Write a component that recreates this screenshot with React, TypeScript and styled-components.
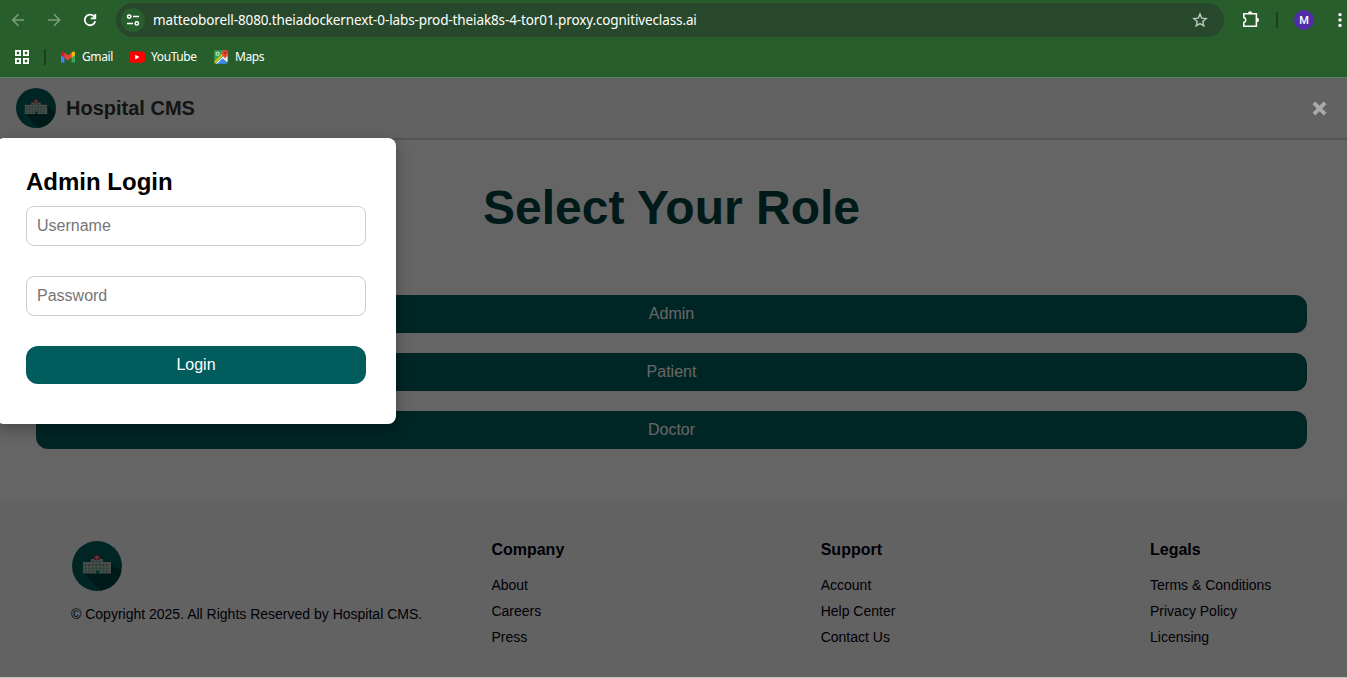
import React from "react";
import styled, { createGlobalStyle } from "styled-components";

const GlobalStyle = createGlobalStyle`
  * { box-sizing: border-box; }
  html, body { margin: 0; padding: 0; overflow: hidden; }
  body { font-family: "Liberation Sans", Arial, sans-serif; }
  h1, h2, h3, p, ul { margin: 0; padding: 0; }
  svg { display: block; flex-shrink: 0; }
`;

const Window = styled.div`
  width: 1347px;
  height: 678px;
  display: flex;
  flex-direction: column;
  overflow: hidden;
`;

const Chrome = styled.div`
  height: 78px;
  flex-shrink: 0;
  background: #285e2b;
  border-bottom: 1px solid #56805a;
  font-family: "Noto Sans", "Open Sans", sans-serif;
  color: #fff;
`;

const Toolbar = styled.div`
  height: 40px;
  display: flex;
  align-items: center;
  padding-left: 10px;
`;

const NavIcons = styled.div`
  display: flex;
  gap: 20px;
  width: 106px;
`;

const AddressBar = styled.div`
  width: 1108px;
  height: 34px;
  border-radius: 17px;
  background: #27482a;
  display: flex;
  align-items: center;
  padding: 0 16px 0 5px;
`;

const SiteBadge = styled.span`
  width: 24px;
  height: 24px;
  border-radius: 50%;
  background: #285e2b;
  display: grid;
  place-items: center;
`;

const Url = styled.span`
  flex: 1;
  margin-left: 8px;
  font-size: 13.5px;
  letter-spacing: -0.115px;
  line-height: 20px;
  white-space: nowrap;
`;

const ToolbarActions = styled.div`
  display: flex;
  align-items: center;
  margin-left: 17px;
`;

const Divider = styled.span<{ $space: string }>`
  width: 2px;
  height: 16px;
  background: #1a401c;
  margin: ${(p) => p.$space};
`;

const Avatar = styled.span`
  width: 20px;
  height: 20px;
  border-radius: 50%;
  background: #512da8;
  font: 500 11px/21px Roboto, sans-serif;
  text-align: center;
  margin-right: 24px;
`;

const Bookmarks = styled.div`
  height: 34px;
  display: flex;
  align-items: center;
  padding-left: 14px;
`;

const Bookmark = styled.span<{ $width: number }>`
  width: ${(p) => p.$width}px;
  display: flex;
  align-items: center;
  gap: 6px;
  font-size: 12px;
  letter-spacing: -0.4px;
  line-height: 16px;
  white-space: nowrap;
`;

const Page = styled.div`
  position: relative;
  flex: 1;
  display: flex;
  flex-direction: column;
  background: #fcfcfc;
  border-bottom: 1px solid #c3c5ad;
`;

const Header = styled.header`
  height: 62px;
  flex-shrink: 0;
  display: flex;
  align-items: center;
  gap: 10px;
  padding: 0 16px;
  background: #f6f6f6;
  border-bottom: 2px solid #cfcfcf;
`;

const Brand = styled.span`
  font-size: 20px;
  font-weight: 700;
  line-height: 24px;
  color: #333;
`;

const Main = styled.main`
  height: 361px;
  flex-shrink: 0;
  padding: 40px 40px 0 36px;
`;

const Title = styled.h1`
  font-size: 48px;
  line-height: 56px;
  text-align: center;
  color: #003f3f;
`;

const Roles = styled.div`
  display: flex;
  flex-direction: column;
  gap: 20px;
  margin-top: 59px;
`;

const Button = styled.button`
  display: block;
  width: 100%;
  height: 38px;
  border: 0;
  border-radius: 12px;
  padding: 0;
  background: #015c5d;
  color: #fff;
  font: 16px/18px "Liberation Sans", Arial, sans-serif;
`;

const Footer = styled.footer`
  flex: 1;
  display: grid;
  grid-template-columns: 420.4px 329.3px 329.3px auto;
  padding: 40px 0 0 71px;
  background: #f5f5f5;
  color: #000010;
`;

const About = styled.div`
  svg { margin-left: 1px; }
`;

const Copyright = styled.p`
  margin-top: 15px;
  font-size: 14px;
  line-height: 16px;
`;

const LinkColumn = styled.div``;

const ColumnTitle = styled.h3`
  font-size: 16px;
  line-height: 18px;
  margin-bottom: 14px;
`;

const Links = styled.ul`
  list-style: none;
  font-size: 14px;
  line-height: 26px;
  margin-top: -1px;
`;

const Overlay = styled.div`
  position: absolute;
  inset: 0;
  background: rgba(0, 0, 0, 0.6);
`;

const Close = styled.span`
  position: absolute;
  top: 23px;
  right: 20.5px;
`;

const Modal = styled.section`
  position: absolute;
  top: 60px;
  left: -4px;
  width: 400px;
  height: 286px;
  padding: 30px;
  border-radius: 8px;
  background: #fff;
  box-shadow: 0 5px 15px rgba(0, 0, 0, 0.3);
`;

const ModalTitle = styled.h2`
  font-size: 24px;
  line-height: 28px;
  margin-bottom: 10px;
`;

const Field = styled.input`
  display: block;
  width: 340px;
  height: 40px;
  margin-bottom: 30px;
  padding: 0 10px;
  border: 1px solid #ccc;
  border-radius: 8px;
  font: 16px "Liberation Sans", Arial, sans-serif;
  &::placeholder { color: #757575; }
`;

const Logo = ({ size }: { size: number }) => (
  <svg width={size} height={size} viewBox="0 0 50 50">
    <clipPath id={`disc${size}`}><circle cx="25" cy="25" r="25" /></clipPath>
    <g clipPath={`url(#disc${size})`}>
      <path fill="#005e5c" d="M0 0h50v50H0z" />
      <path fill="#003f3f" d="M11 32 29 50h21V31L38 21z" />
      <path fill="#b4c0b8" d="M11 21h8v-3h12v3h8v11.5H11z" />
      <path stroke="#5f9c87" strokeWidth="1.8" strokeDasharray="2 1.6" d="M12.5 24h25M12.5 27.3h25M12.5 30.4h25M20.5 20.6h9" />
      <path fill="#007a65" d="M24 29.5h3v3h-3z" />
      <path fill="#c63b50" d="M23.3 14h3.4l1.3 1.3v3l-1 .7h-4l-1-.7v-3z" />
      <path stroke="#eebcc4" strokeWidth="1" d="M23.4 16.6h3.2M25 15v3.2" />
    </g>
  </svg>
);

const Arrow = ({ forward = false }: { forward?: boolean }) => (
  <svg width="16" height="16" viewBox="0 0 16 16" fill="none" stroke="#7d9f7e" strokeWidth="1.6">
    <path d={forward ? "M2 8h11.5M8 2.3 13.7 8 8 13.7" : "M14 8H3M8.5 2.3 2.8 8l5.7 5.7"} />
  </svg>
);

const columns = [
  { title: "Company", links: ["About", "Careers", "Press"] },
  { title: "Support", links: ["Account", "Help Center", "Contact Us"] },
  { title: "Legals", links: ["Terms & Conditions", "Privacy Policy", "Licensing"] },
];

export default function App() {
  return (
    <Window>
      <GlobalStyle />
      <Chrome>
        <Toolbar>
          <NavIcons>
            <Arrow />
            <Arrow forward />
            <svg width="16" height="16" viewBox="0 0 16 16" fill="none" stroke="#fff" strokeWidth="1.8">
              <path d="M13.2 9.2A5.3 5.3 0 1 1 11.8 4.2L13 5.5M13.3 2v4.4H8.8" />
            </svg>
          </NavIcons>
          <AddressBar>
            <SiteBadge>
              <svg width="14" height="14" viewBox="0 0 14 14" fill="none" stroke="#fff" strokeWidth="1.5">
                <circle cx="3.2" cy="3.6" r="1.7" />
                <path d="M7 3.6h6M1 10.4h6" />
                <circle cx="10.8" cy="10.4" r="1.7" />
              </svg>
            </SiteBadge>
            <Url>matteoborell-8080.theiadockernext-0-labs-prod-theiak8s-4-tor01.proxy.cognitiveclass.ai</Url>
            <svg width="16" height="16" viewBox="0 0 16 16" fill="none" stroke="#bfc8bf" strokeWidth="1.4">
              <path d="m8 1.9 1.7 4.2 4.5.4-3.4 3 1 4.4L8 11.6l-3.8 2.3 1-4.4-3.4-3 4.5-.4z" />
            </svg>
          </AddressBar>
          <ToolbarActions>
            <svg width="20" height="20" viewBox="0 0 20 20" fill="none" stroke="#fff" strokeWidth="1.6" strokeLinejoin="round">
              <path d="M2.8 3.8h12.6v12.4H2.8v-3.6c2.6-.6 2.6-4.6 0-5.2z" />
              <path fill="#fff" stroke="none" d="M7 3.4a2.1 2.1 0 0 1 4.2 0zM15.8 7.7a2.1 2.1 0 0 1 0 4.4z" />
            </svg>
            <Divider $space="0 16px 0 15px" />
            <Avatar>M</Avatar>
            <svg width="4" height="16" viewBox="0 0 4 16" fill="#fff">
              <circle cx="2" cy="2.6" r="1.7" /><circle cx="2" cy="8" r="1.7" /><circle cx="2" cy="13.4" r="1.7" />
            </svg>
          </ToolbarActions>
        </Toolbar>
        <Bookmarks>
          <svg width="16" height="16" viewBox="0 0 16 16" fill="none" stroke="#fff" strokeWidth="1.8">
            <path d="M1.9 1.9h4.2v4.2H1.9zM9.9 1.9h4.2v4.2H9.9zM1.9 9.9h4.2v4.2H1.9zM9.9 9.9h4.2v4.2H9.9z" />
          </svg>
          <Divider $space="0 14px" />
          <Bookmark $width={69}>
            <svg width="16" height="16" viewBox="0 0 16 16">
              <path fill="#4285f4" d="M1 5v8.5h3.4V7z" />
              <path fill="#34a853" d="M11.6 7v6.5H15V5z" />
              <path fill="#ea4335" d="M4.2 8.6V3.5L8 6.4l3.8-2.9v5.1L8 11.4z" />
              <path fill="#c5221f" d="M1 4.2C1 2.4 2.8 2 4.4 3.6v5L1 6.2z" />
              <path fill="#fbbc04" d="M15 4.2c0-1.8-1.8-2.2-3.4-.6v5L15 6.2z" />
            </svg>
            Gmail
          </Bookmark>
          <Bookmark $width={84}>
            <svg width="16" height="16" viewBox="0 0 16 16">
              <rect y="2.4" width="16" height="11.4" rx="3" fill="#f00" />
              <path fill="#fff" d="M6.2 5.7v4.8L10.5 8.1z" />
            </svg>
            YouTube
          </Bookmark>
          <Bookmark $width={70}>
            <svg width="16" height="16" viewBox="0 0 16 16">
              <path fill="#34a853" d="M1.4 1.4h12v13H1.4z" />
              <path fill="#f1f3f4" d="M2.5 14.6 12.4 5.2h2.2v8.4l-4.8-4.2-5 5.2z" />
              <path fill="#4285f4" d="M4.4 14.8 9.3 9.4l5.2 5.4z" />
              <path fill="#fbbc04" d="m1.4 12.6 8-8 1.1 1.2-8.8 8.8z" />
              <circle cx="4.6" cy="4.8" r="1.6" stroke="#fff" strokeWidth=".8" fill="none" />
              <path fill="#ea4335" d="M12 10c-.3-2-3-3-3-6a3.1 3.1 0 0 1 6.2 0c0 3-2.8 4-3.2 6z" />
              <circle cx="12.1" cy="3.8" r="1.1" fill="#a52714" />
            </svg>
            Maps
          </Bookmark>
        </Bookmarks>
      </Chrome>
      <Page>
        <Header>
          <Logo size={40} />
          <Brand>Hospital CMS</Brand>
        </Header>
        <Main>
          <Title>Select Your Role</Title>
          <Roles>
            <Button>Admin</Button>
            <Button>Patient</Button>
            <Button>Doctor</Button>
          </Roles>
        </Main>
        <Footer>
          <About>
            <Logo size={50} />
            <Copyright>© Copyright 2025. All Rights Reserved by Hospital CMS.</Copyright>
          </About>
          {columns.map((c) => (
            <LinkColumn key={c.title}>
              <ColumnTitle>{c.title}</ColumnTitle>
              <Links>{c.links.map((l) => <li key={l}>{l}</li>)}</Links>
            </LinkColumn>
          ))}
        </Footer>
        <Overlay />
        <Close>
          <svg width="15" height="15" viewBox="0 0 15 15" stroke="#aaa" strokeWidth="3.9">
            <path d="m1.9 1.9 11.2 11.2M13.1 1.9 1.9 13.1" />
          </svg>
        </Close>
        <Modal>
          <ModalTitle>Admin Login</ModalTitle>
          <Field placeholder="Username" />
          <Field placeholder="Password" type="password" />
          <Button>Login</Button>
        </Modal>
      </Page>
    </Window>
  );
}
